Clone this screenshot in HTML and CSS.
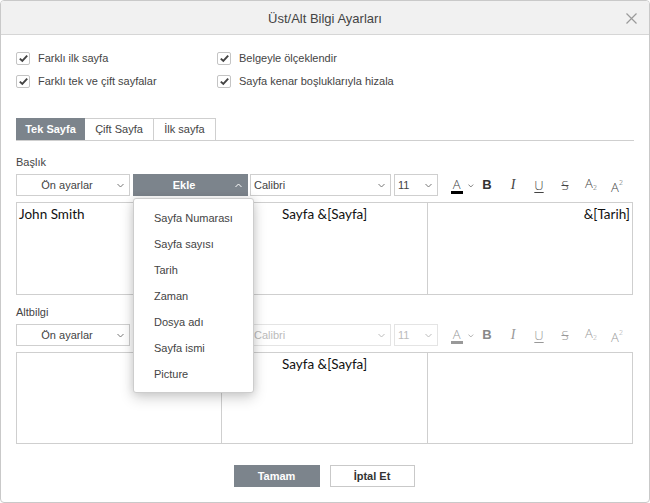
FILE: index.html
```html
<!DOCTYPE html>
<html lang="tr">
<head>
<meta charset="utf-8">
<title>Üst/Alt Bilgi Ayarları</title>
<link rel="stylesheet" href="styles.css">
</head>
<body>
<div class="dialog">
  <div class="header">
    <span class="title">Üst/Alt Bilgi Ayarları</span>
    <svg class="close" width="11" height="11" viewBox="0 0 11 11"><path d="M0.5 0.5 L10.5 10.5 M10.5 0.5 L0.5 10.5" stroke="#9a9a9a" stroke-width="1.2" fill="none"/></svg>
  </div>
  <div class="body">
    <div class="options">
      <label class="opt"><span class="cb"><svg width="11" height="11" viewBox="0 0 11 11"><path d="M1.8 5.6 L4.3 8 L9.2 2.6" stroke="#444" stroke-width="1.9" fill="none"/></svg></span>Farklı ilk sayfa</label>
      <label class="opt"><span class="cb"><svg width="11" height="11" viewBox="0 0 11 11"><path d="M1.8 5.6 L4.3 8 L9.2 2.6" stroke="#444" stroke-width="1.9" fill="none"/></svg></span>Belgeyle ölçeklendir</label>
      <label class="opt"><span class="cb"><svg width="11" height="11" viewBox="0 0 11 11"><path d="M1.8 5.6 L4.3 8 L9.2 2.6" stroke="#444" stroke-width="1.9" fill="none"/></svg></span>Farklı tek ve çift sayfalar</label>
      <label class="opt"><span class="cb"><svg width="11" height="11" viewBox="0 0 11 11"><path d="M1.8 5.6 L4.3 8 L9.2 2.6" stroke="#444" stroke-width="1.9" fill="none"/></svg></span>Sayfa kenar boşluklarıyla hizala</label>
    </div>

    <div class="tabs">
      <div class="tab active">Tek Sayfa</div>
      <div class="tab">Çift Sayfa</div>
      <div class="tab">İlk sayfa</div>
    </div>

    <div class="section-label">Başlık</div>
    <div class="toolbar">
      <div class="sel preset"><span class="sel-text">Ön ayarlar</span><svg class="chev" width="7" height="5" viewBox="0 0 7 5"><path d="M0.5 1 L3.5 4 L6.5 1" stroke="#777" stroke-width="1" fill="none"/></svg></div>
      <div class="insert-wrap">
        <div class="insert"><span class="sel-text">Ekle</span><svg class="chev" width="7" height="5" viewBox="0 0 7 5"><path d="M0.5 4 L3.5 1 L6.5 4" stroke="#fff" stroke-width="1" fill="none"/></svg></div>
        <div class="menu">
          <div class="menu-item">Sayfa Numarası</div>
          <div class="menu-item">Sayfa sayısı</div>
          <div class="menu-item">Tarih</div>
          <div class="menu-item">Zaman</div>
          <div class="menu-item">Dosya adı</div>
          <div class="menu-item">Sayfa ismi</div>
          <div class="menu-item">Picture</div>
        </div>
      </div>
      <div class="sel font"><span class="sel-text left">Calibri</span><svg class="chev" width="7" height="5" viewBox="0 0 7 5"><path d="M0.5 1 L3.5 4 L6.5 1" stroke="#777" stroke-width="1" fill="none"/></svg></div>
      <div class="sel size"><span class="sel-text left">11</span><svg class="chev" width="7" height="5" viewBox="0 0 7 5"><path d="M0.5 1 L3.5 4 L6.5 1" stroke="#777" stroke-width="1" fill="none"/></svg></div>
      <div class="icon color"><span class="glyph a">A<span class="bar"></span></span><svg class="chev small" width="6" height="4" viewBox="0 0 6 4"><path d="M0.5 0.5 L3 3 L5.5 0.5" stroke="#777" stroke-width="1" fill="none"/></svg></div>
      <div class="icon"><span class="glyph b">B</span></div>
      <div class="icon"><span class="glyph i">I</span></div>
      <div class="icon"><span class="glyph u">U</span></div>
      <div class="icon"><span class="glyph s">S</span></div>
      <div class="icon"><span class="glyph sub">A<small>2</small></span></div>
      <div class="icon"><span class="glyph sup">A<small>2</small></span></div>
    </div>
    <div class="editor head-ed">
      <div class="cell c-left">John Smith</div>
      <div class="cell c-center">Sayfa &amp;[Sayfa]</div>
      <div class="cell c-right">&amp;[Tarih]</div>
    </div>

    <div class="section-label second">Altbilgi</div>
    <div class="toolbar disabled">
      <div class="sel preset on"><span class="sel-text">Ön ayarlar</span><svg class="chev" width="7" height="5" viewBox="0 0 7 5"><path d="M0.5 1 L3.5 4 L6.5 1" stroke="#777" stroke-width="1" fill="none"/></svg></div>
      <div class="insert-wrap"><div class="insert"><span class="sel-text">Ekle</span></div></div>
      <div class="sel font"><span class="sel-text left">Calibri</span><svg class="chev" width="7" height="5" viewBox="0 0 7 5"><path d="M0.5 1 L3.5 4 L6.5 1" stroke="#bbb" stroke-width="1" fill="none"/></svg></div>
      <div class="sel size"><span class="sel-text left">11</span><svg class="chev" width="7" height="5" viewBox="0 0 7 5"><path d="M0.5 1 L3.5 4 L6.5 1" stroke="#bbb" stroke-width="1" fill="none"/></svg></div>
      <div class="icon color"><span class="glyph a">A<span class="bar"></span></span><svg class="chev small" width="6" height="4" viewBox="0 0 6 4"><path d="M0.5 0.5 L3 3 L5.5 0.5" stroke="#aaa" stroke-width="1" fill="none"/></svg></div>
      <div class="icon"><span class="glyph b">B</span></div>
      <div class="icon"><span class="glyph i">I</span></div>
      <div class="icon"><span class="glyph u">U</span></div>
      <div class="icon"><span class="glyph s">S</span></div>
      <div class="icon"><span class="glyph sub">A<small>2</small></span></div>
      <div class="icon"><span class="glyph sup">A<small>2</small></span></div>
    </div>
    <div class="editor foot-ed">
      <div class="cell c-left"></div>
      <div class="cell c-center">Sayfa &amp;[Sayfa]</div>
      <div class="cell c-right"></div>
    </div>

    <div class="buttons">
      <div class="btn primary">Tamam</div>
      <div class="btn secondary">İptal Et</div>
    </div>
  </div>
</div>
</body>
</html>
```

FILE: styles.css
```css
* { box-sizing: border-box; }
html, body { margin: 0; padding: 0; background: #fff; }
body { font-family: "Liberation Sans", Arial, sans-serif; font-size: 11px; color: #444; }

.dialog {
  position: relative;
  width: 650px;
  height: 503px;
  border: 1px solid #c9c9c9;
  border-radius: 4px;
  background: #fff;
  overflow: hidden;
}

.header {
  height: 34px;
  background: #f1f1f1;
  border-bottom: 1px solid #d6d6d6;
  display: flex;
  align-items: center;
  justify-content: center;
  position: relative;
  padding-top: 1px;
}
.title { font-size: 13px; color: #444; }
.close { position: absolute; right: 12px; top: 12px; }

.body { padding: 16px 16px 0 15px; }

.options {
  display: grid;
  grid-template-columns: 201px auto;
  row-gap: 9px;
}
.opt { display: flex; align-items: center; height: 14px; color: #444; }
.cb {
  width: 14px; height: 13px;
  border: 1px solid #c4c4c4;
  border-radius: 2px;
  margin-right: 8px;
  display: flex; align-items: center; justify-content: center;
}

.tabs {
  margin-top: 30px;
  display: flex;
  border-bottom: 1px solid #cfcfcf;
  width: 618px;
}
.tab {
  height: 22px;
  line-height: 21px;
  border: 1px solid #cfcfcf;
  border-bottom: none;
  border-left: none;
  text-align: center;
  color: #444;
  width: 69px;
}
.tab:first-child { border-left: 1px solid #cfcfcf; }
.tab:nth-child(3) { width: 62px; }
.tab.active { background: #7c848c; color: #fff; font-weight: bold; border-color: #7c848c; }

.section-label { margin: 14px 0 5px; line-height: 14px; color: #444; }
.section-label.second { margin-top: 10px; }

.toolbar { display: flex; align-items: center; height: 22px; }
.sel {
  height: 22px;
  border: 1px solid #cfcfcf;
  display: flex;
  align-items: center;
  color: #444;
  background: #fff;
}
.sel-text { flex: 1; text-align: center; }
.sel-text.left { text-align: left; }
.preset { width: 114px; margin-right: 3px; padding: 0 5px 0 0; }
.font { width: 141px; margin-right: 3px; padding: 0 5px 0 3px; }
.size { width: 44px; padding: 0 5px 0 3px; }

.insert-wrap { position: relative; width: 115px; margin-right: 2px; }
.insert {
  height: 22px;
  background: #7c848c;
  color: #fff;
  font-weight: bold;
  display: flex;
  align-items: center;
  padding: 0 6px 0 0;
}

.menu {
  position: absolute;
  left: 0;
  top: 24px;
  width: 121px;
  background: #fff;
  border: 1px solid #cdcdcd;
  border-radius: 3px;
  padding: 6px 0 5px;
  box-shadow: 0 5px 14px rgba(0, 0, 0, 0.18), 0 0 8px rgba(0, 0, 0, 0.1);
  z-index: 10;
}
.menu-item { height: 26px; line-height: 26px; padding-left: 20px; color: #444; }

.icon {
  width: 26px;
  height: 22px;
  display: flex;
  align-items: center;
  justify-content: center;
  color: #444;
}
.icon.color { margin-left: 10px; justify-content: flex-start; padding-left: 3px; }
.icon.color .chev { margin-left: 6px; margin-top: 1px; }
.glyph { position: relative; font-family: "Open Sans", "Liberation Sans", sans-serif; font-weight: 300; font-size: 13px; line-height: 14px; }
.glyph.a { display: inline-block; width: 12px; text-align: center; line-height: 12px; font-size: 13px; margin-top: -3px; }
.glyph.a .bar { position: absolute; left: 0; bottom: -4px; width: 12px; height: 3px; background: #000; }
.glyph.b { font-family: "Liberation Sans", Arial, sans-serif; font-weight: bold; font-size: 13px; color: #333; }
.glyph.i { font-family: "Liberation Serif", serif; font-style: italic; font-weight: normal; font-size: 14px; }
.glyph.u { text-decoration: underline; text-underline-offset: 2px; text-decoration-thickness: 1px; }
.glyph.s { text-decoration: line-through; text-decoration-thickness: 1px; }
.glyph small { font-size: 7px; }
.glyph.sub small { vertical-align: -2px; }
.glyph.sup small { vertical-align: 7px; }

.toolbar.disabled .font, .toolbar.disabled .size { color: #bbb; border-color: #e4e4e4; }
.toolbar.disabled .icon { color: #999; }
.toolbar.disabled .glyph.b { color: #888; }
.toolbar.disabled .glyph.a .bar { background: #999; }

.editor {
  margin-top: 6px;
  width: 617px;
  display: grid;
  grid-template-columns: 204px 206px 207px;
  border: 1px solid #cfcfcf;
  font-family: "Lato", "Open Sans", sans-serif;
  font-size: 13.5px;
  color: #111;
}
.head-ed { height: 93px; }
.foot-ed { height: 92px; }
.cell { padding: 2px 3px; line-height: 19px; border-left: 1px solid #cfcfcf; }
.cell.c-left { border-left: none; padding-left: 2px; }
.cell.c-center { text-align: center; }
.cell.c-right { text-align: right; padding-right: 4px; }

.buttons {
  margin-top: 21px;
  display: flex;
  justify-content: center;
  gap: 10px;
  padding-right: 1px;
}
.btn {
  height: 22px;
  line-height: 20px;
  text-align: center;
  font-weight: bold;
  border: 1px solid #c9c9c9;
}
.btn.primary { width: 86px; background: #7c848c; border-color: #7c848c; color: #fff; }
.btn.secondary { width: 85px; background: #fff; color: #333; }
```
